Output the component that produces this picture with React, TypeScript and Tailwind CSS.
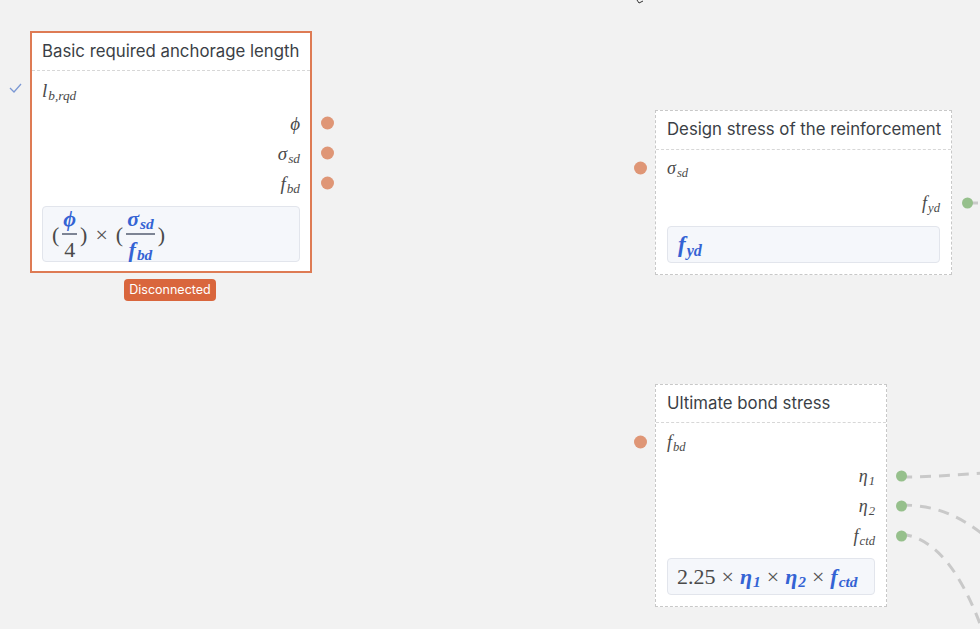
import React from "react";

const serif = "font-['Liberation_Serif',serif]";

function Sym({ base, sub, bold = false, size = "text-[19px]", className = "" }: { base: string; sub?: string; bold?: boolean; size?: string; className?: string }) {
  return (
    <span className={`${serif} italic ${size} ${bold ? "font-bold" : ""} ${className} leading-none whitespace-nowrap`}>
      {base}
      {sub && <sub className={`text-[0.7em] ${bold ? "font-bold" : ""} ml-[1px]`}>{sub}</sub>}
    </span>
  );
}

function Dot({ color, pos }: { color: "orange" | "green"; pos: string }) {
  const cls = color === "orange" ? "w-[13px] h-[13px] bg-[#df9676]" : "w-[11px] h-[11px] bg-[#96c08c]";
  return <span className={`absolute top-1/2 -translate-y-1/2 rounded-full ${cls} ${pos}`} />;
}

function Row({ children, handle }: { children: React.ReactNode; handle?: React.ReactNode }) {
  return (
    <div className="relative h-[30px] flex items-center justify-end">
      {children}
      {handle}
    </div>
  );
}

function Frac({ top, bottom }: { top: React.ReactNode; bottom: React.ReactNode }) {
  return (
    <span className="inline-flex flex-col items-center mx-[2px] align-middle">
      <span className="pb-[3px] px-[1px] leading-none">{top}</span>
      <span className="w-full h-[2px] bg-[#7d8494]" />
      <span className="pt-[4px] px-[1px] leading-none">{bottom}</span>
    </span>
  );
}

export default function App() {
  const blue = "text-[#3463d4]";
  const dark = "text-[#4a4a4a]";
  const title = "flex items-center text-[16.8px] text-[#3b3f46] whitespace-nowrap border-b border-dashed border-[#d7d7d7]";
  const op = `${serif} text-[22px] text-[#555]`;
  return (
    <div className="relative w-[980px] h-[629px] overflow-hidden bg-[#f2f2f2] font-['Inter',sans-serif]">
      <svg className="absolute inset-0 pointer-events-none" width="980" height="629">
        <g fill="none" stroke="#c9c9c9" strokeWidth="3" strokeDasharray="11 8">
          <path d="M967 203 L990 203" strokeDasharray="" />
          <path d="M901 477 C 930 477, 955 475, 985 473" />
          <path d="M901 505 C 935 505, 960 515, 990 540" />
          <path d="M901 534 C 935 538, 960 570, 982 629" />
        </g>
        <path d="M637 0 L639 3 L643 1" fill="none" stroke="#333" strokeWidth="1" />
        <polyline points="10,88 14,92 21,84" fill="none" stroke="#7b98d4" strokeWidth="1.3" />
      </svg>

      {/* Basic required anchorage length */}
      <div className="absolute left-[30px] top-[31px] w-[282px]">
        <div className="border-2 border-[#de7b54] bg-white">
          <div className={`h-[38px] px-[10px] ${title}`}>Basic required anchorage length</div>
          <div className="px-[10px] pt-[9px] pb-[9px]">
            <div className="h-5 flex items-center">
              <Sym base="l" sub="b,rqd" className={dark} />
            </div>
            <div className="mt-[8px]">
              <Row handle={<Dot color="orange" pos="-right-[34px]" />}>
                <Sym base="ϕ" className={dark} />
              </Row>
              <Row handle={<Dot color="orange" pos="-right-[34px]" />}>
                <Sym base="σ" sub="sd" className={dark} />
              </Row>
              <Row handle={<Dot color="orange" pos="-right-[34px]" />}>
                <Sym base="f" sub="bd" className={dark} />
              </Row>
            </div>
            <div className="mt-[8px] h-[56px] rounded-[4px] border border-[#e2e5ec] bg-[#f5f7fb] flex items-center px-[9px]">
              <span className={`${serif} ${dark} text-[22px] flex items-center gap-[1px]`}>
                <span>(</span>
                <Frac top={<Sym base="ϕ" bold className={blue} size="text-[22px]" />} bottom={<span className={`${serif} text-[22px] ${dark}`}>4</span>} />
                <span>)</span>
                <span className="mx-[7px] text-[#555]">×</span>
                <span>(</span>
                <Frac
                  top={<Sym base="σ" sub="sd" bold className={blue} size="text-[22px]" />}
                  bottom={<Sym base="f" sub="bd" bold className={blue} size="text-[22px]" />}
                />
                <span>)</span>
              </span>
            </div>
          </div>
        </div>
        <div className="flex justify-center mt-[6px] pr-[2px]">
          <span className="rounded-[4px] bg-[#d9663d] text-white text-[12.5px] h-[22px] px-[5px] flex items-center">Disconnected</span>
        </div>
      </div>

      {/* Design stress of the reinforcement */}
      <div className="absolute left-[655px] top-[110px] w-[297px] border border-dashed border-[#c8c8c8] bg-white">
        <div className={`h-[39px] px-[11px] ${title}`}>Design stress of the reinforcement</div>
        <div className="px-[11px] pt-[8px] pb-[11px]">
          <div className="relative h-5 flex items-center">
            <Sym base="σ" sub="sd" className={dark} size="text-[18px]" />
            <Dot color="orange" pos="-left-[33px]" />
          </div>
          <div className="mt-[10px]">
            <Row handle={<Dot color="green" pos="-right-[33px]" />}>
              <Sym base="f" sub="yd" className={dark} size="text-[18px]" />
            </Row>
          </div>
          <div className="mt-[8px] h-[37px] rounded-[4px] border border-[#e2e5ec] bg-[#f5f7fb] flex items-center px-[10px]">
            <Sym base="f" sub="yd" bold className={blue} size="text-[23px]" />
          </div>
        </div>
      </div>

      {/* Ultimate bond stress */}
      <div className="absolute left-[655px] top-[384px] w-[232px] border border-dashed border-[#c8c8c8] bg-white">
        <div className={`h-[38px] px-[11px] ${title}`}>Ultimate bond stress</div>
        <div className="px-[11px] pt-[9px] pb-[11px]">
          <div className="relative h-5 flex items-center">
            <Sym base="f" sub="bd" className={dark} size="text-[18px]" />
            <Dot color="orange" pos="-left-[33px]" />
          </div>
          <div className="mt-[9px]">
            <Row handle={<Dot color="green" pos="-right-[32px]" />}>
              <Sym base="η" sub="1" className={dark} size="text-[18px]" />
            </Row>
            <Row handle={<Dot color="green" pos="-right-[32px]" />}>
              <Sym base="η" sub="2" className={dark} size="text-[18px]" />
            </Row>
            <Row handle={<Dot color="green" pos="-right-[32px]" />}>
              <Sym base="f" sub="ctd" className={dark} size="text-[18px]" />
            </Row>
          </div>
          <div className="mt-[7px] h-[37px] rounded-[4px] border border-[#e2e5ec] bg-[#f5f7fb] flex items-center px-[9px] gap-[6px]">
            <span className={`${serif} text-[22px] ${dark}`}>2.25</span>
            <span className={op}>×</span>
            <Sym base="η" sub="1" bold className={blue} size="text-[22px]" />
            <span className={op}>×</span>
            <Sym base="η" sub="2" bold className={blue} size="text-[22px]" />
            <span className={op}>×</span>
            <Sym base="f" sub="ctd" bold className={blue} size="text-[22px]" />
          </div>
        </div>
      </div>
    </div>
  );
}
